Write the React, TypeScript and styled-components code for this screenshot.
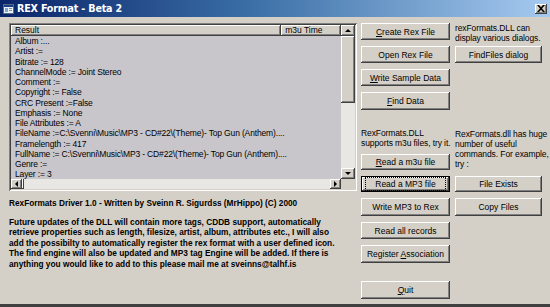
import React from "react";
import styled, { createGlobalStyle, css } from "styled-components";

const GlobalStyle = createGlobalStyle`
  html, body {
    margin: 0;
    padding: 0;
    background: #d4d0c8;
  }
  body {
    width: 550px;
    height: 307px;
    overflow: hidden;
    font-family: "Liberation Sans", Arial, sans-serif;
  }
`;

const raised = css`
  background: #d4d0c8;
  box-shadow: inset -1px -1px #404040, inset 1px 1px #ffffff,
    inset -2px -2px #808080, inset 2px 2px #d4d0c8;
`;

const rows = [
  "Album :...",
  "Artist :=",
  "Bitrate := 128",
  "ChannelMode := Joint Stereo",
  "Comment :=",
  "Copyright := False",
  "CRC Present :=False",
  "Emphasis := None",
  "File Attributes := A",
  "FileName :=C:\\Svenni\\Music\\MP3 - CD#22\\(Theme)- Top Gun (Anthem)....",
  "Framelength := 417",
  "FullName := C:\\Svenni\\Music\\MP3 - CD#22\\(Theme)- Top Gun (Anthem)....",
  "Genre :=",
  "Layer := 3",
];

type ButtonProps = {
  col: string;
  row: string;
  isDefault?: boolean;
  children: React.ReactNode;
};

const Button = ({ col, row, isDefault, children }: ButtonProps) => (
  <ButtonFace $col={col} $row={row} $default={isDefault}>
    {isDefault ? <Focus>{children}</Focus> : <span>{children}</span>}
  </ButtonFace>
);

const App = () => {
  return (
    <>
      <GlobalStyle />
      <Window>
        <TitleBar>
          <AppIcon width="11" height="10" viewBox="0 0 11 10">
            <rect x="0.5" y="0.5" width="10" height="9" fill="#e8f0f8" stroke="#5a6a80" />
            <rect x="1" y="1" width="9" height="2" fill="#1c3c8c" />
            <rect x="2" y="4" width="3" height="4" fill="#7fa8d0" />
            <rect x="6" y="4" width="3" height="1" fill="#8a8a8a" />
            <rect x="6" y="6" width="3" height="1" fill="#8a8a8a" />
          </AppIcon>
          <Title>REX Format - Beta 2</Title>
          <CloseButton>
            <svg width="8" height="7" viewBox="0 0 8 7">
              <path d="M0 0h2l2 2.2L6 0h2L5 3.5 8 7H6L4 4.8 2 7H0l3-3.5z" fill="#000" />
            </svg>
          </CloseButton>
        </TitleBar>
        <Body>
          <LeftColumn>
            <ListFrame>
              <ListArea>
                <Header>
                  <HeaderCell $width={271}>Result</HeaderCell>
                  <HeaderCell $width={60}>m3u Time</HeaderCell>
                </Header>
                <Rows>
                  {rows.map((r) => (
                    <Row key={r}>{r}</Row>
                  ))}
                </Rows>
              </ListArea>
              <VScroll>
                <ArrowButton>
                  <Arrow $dir="up" />
                </ArrowButton>
                <Thumb />
                <Track />
                <ArrowButton>
                  <Arrow $dir="down" />
                </ArrowButton>
              </VScroll>
              <HScroll>
                <ArrowButton>
                  <Arrow $dir="left" />
                </ArrowButton>
                <HThumb />
                <Track />
                <ArrowButton>
                  <Arrow $dir="right" />
                </ArrowButton>
              </HScroll>
              <Corner />
            </ListFrame>
            <Credit>RexFormats Driver 1.0 - Written by Sveinn R. Sigurdss (MrHippo) (C) 2000</Credit>
            <Notes>
              Future updates of the DLL will contain more tags, CDDB support, automatically
              <br />
              retrieve properties such as length, filesize, artist, album, attributes etc., I will also
              <br />
              add the possibilty to automatically register the rex format with a user defined icon.
              <br />
              The find engine will also be updated and MP3 tag Engine will be added. If there is
              <br />
              anything you would like to add to this please mail me at sveinns@talhf.is
            </Notes>
          </LeftColumn>
          <Controls>
            <Button col="1" row="1">
              <u>C</u>reate Rex File
            </Button>
            <Label $col="2" $row="1">
              rexFormats.DLL can
              <br />
              display various dialogs.
            </Label>
            <Button col="1" row="2">Open Rex File</Button>
            <Button col="2" row="2">FindFiles dialog</Button>
            <Button col="1" row="3">
              <u>W</u>rite Sample Data
            </Button>
            <Button col="1" row="4">
              <u>F</u>ind Data
            </Button>
            <Label $col="1" $row="5" $align="end">
              RexFormats.DLL
              <br />
              supports m3u files, try it.
            </Label>
            <Label $col="2" $row="5 / span 2" $pad={13}>
              RexFormats.dll has huge
              <br />
              number of useful
              <br />
              commands. For example,
              <br />
              try :
            </Label>
            <Button col="1" row="6">
              <u>R</u>ead a m3u file
            </Button>
            <Button col="1" row="7" isDefault>
              Read a MP3 file
            </Button>
            <Button col="2" row="7">File Exists</Button>
            <Button col="1" row="8">Write MP3 to Rex</Button>
            <Button col="2" row="8">Copy Files</Button>
            <Button col="1" row="9">Read all records</Button>
            <Button col="1" row="10">
              Register <u>A</u>ssociation
            </Button>
            <Button col="1" row="12">
              <u>Q</u>uit
            </Button>
          </Controls>
        </Body>
      </Window>
    </>
  );
};

const Window = styled.div`
  width: 550px;
  height: 307px;
  box-sizing: border-box;
  display: flex;
  flex-direction: column;
  background: #d4d0c8;
  border-bottom: 3px solid #404040;
`;

const TitleBar = styled.div`
  height: 17px;
  display: flex;
  align-items: center;
  padding: 0 3px 0 3px;
  background: linear-gradient(to right, #0a246a 0%, #3a6ea5 45%, #a6caf0 100%);
`;

const AppIcon = styled.svg`
  flex: none;
  margin-right: 3px;
`;

const Title = styled.div`
  flex: 1;
  color: #ffffff;
  font-weight: bold;
  font-size: 9.6px;
  font-family: "DejaVu Sans", Tahoma, sans-serif;
  letter-spacing: -0.2px;
`;

const CloseButton = styled.div`
  ${raised};
  width: 12px;
  height: 10px;
  display: flex;
  align-items: center;
  justify-content: center;
`;

const Body = styled.div`
  flex: 1;
  display: flex;
  padding: 6px 0 0 9px;
  gap: 4px;
`;

const LeftColumn = styled.div`
  width: 348px;
  display: flex;
  flex-direction: column;
`;

const ListFrame = styled.div`
  height: 168px;
  box-sizing: border-box;
  padding: 2px;
  display: grid;
  grid-template-columns: 1fr 14px;
  grid-template-rows: 1fr 10px;
  background: #d4d0c8;
  box-shadow: inset 1px 1px #808080, inset -1px -1px #ffffff,
    inset 2px 2px #404040, inset -2px -2px #d4d0c8;
`;

const ListArea = styled.div`
  background: #c8c6cb;
  overflow: hidden;
  display: flex;
  flex-direction: column;
`;

const Header = styled.div`
  display: flex;
  height: 11px;
  flex: none;
`;

const HeaderCell = styled.div<{ $width: number }>`
  ${raised};
  width: ${(p) => p.$width}px;
  box-sizing: border-box;
  padding: 0 0 0 4px;
  font-size: 8.5px;
  line-height: 11px;
  color: #000;
  white-space: nowrap;
  overflow: hidden;
`;

const Rows = styled.div`
  padding: 0 0 0 4px;
  overflow: hidden;
  flex: 1;
`;

const Row = styled.div`
  font-size: 8.5px;
  line-height: 10.25px;
  height: 10.25px;
  color: #000;
  white-space: nowrap;
  letter-spacing: -0.15px;
`;

const VScroll = styled.div`
  display: flex;
  flex-direction: column;
  background: #e9e7e3;
`;

const HScroll = styled.div`
  display: flex;
  background: #e9e7e3;
`;

const ArrowButton = styled.div`
  ${raised};
  flex: none;
  width: 14px;
  height: 11px;
  display: flex;
  align-items: center;
  justify-content: center;
  ${HScroll} & {
    width: 11px;
    height: 10px;
  }
`;

const Arrow = styled.div<{ $dir: "up" | "down" | "left" | "right" }>`
  width: 0;
  height: 0;
  border: 3px solid transparent;
  ${(p) =>
    p.$dir === "up"
      ? "border-bottom-color:#000;border-top-width:0;"
      : p.$dir === "down"
      ? "border-top-color:#000;border-bottom-width:0;"
      : p.$dir === "left"
      ? "border-right-color:#000;border-left-width:0;"
      : "border-left-color:#000;border-right-width:0;"}
`;

const Thumb = styled.div`
  ${raised};
  height: 67px;
  flex: none;
`;

const HThumb = styled.div`
  ${raised};
  width: 2px;
  flex: none;
`;

const Track = styled.div`
  flex: 1;
`;

const Corner = styled.div`
  background: #d4d0c8;
`;

const Credit = styled.div`
  margin-top: 8px;
  font-size: 8.25px;
  font-weight: bold;
  line-height: 10px;
  color: #000;
  white-space: nowrap;
`;

const Notes = styled.div`
  margin-top: 8px;
  font-size: 8.3px;
  font-weight: bold;
  line-height: 10.4px;
  color: #000;
  white-space: nowrap;
`;

const Controls = styled.div`
  display: grid;
  grid-template-columns: 89px 87px;
  grid-template-rows: 17px 17px 17px 18px 32px 16px 16px 18px 17px 18px 6px 18px;
  column-gap: 5px;
  row-gap: 6px;
  align-content: start;
`;

const ButtonFace = styled.div<{ $col: string; $row: string; $default?: boolean }>`
  ${raised};
  grid-column: ${(p) => p.$col};
  grid-row: ${(p) => p.$row};
  display: flex;
  align-items: center;
  justify-content: center;
  font-size: 8.5px;
  color: #000;
  white-space: nowrap;
  ${(p) =>
    p.$default &&
    css`
      box-shadow: inset 0 0 0 1px #000, inset -2px -2px #404040,
        inset 2px 2px #ffffff, inset -3px -3px #808080;
    `}
`;

const Focus = styled.span`
  outline: 1px dotted #000;
  outline-offset: 1px;
  padding: 0 8px;
`;

const Label = styled.div<{ $col: string; $row: string; $align?: string; $pad?: number }>`
  grid-column: ${(p) => p.$col};
  grid-row: ${(p) => p.$row};
  align-self: ${(p) => p.$align ?? "start"};
  padding-top: ${(p) => p.$pad ?? 0}px;
  font-size: 8.5px;
  line-height: 10px;
  color: #000;
  white-space: nowrap;
  letter-spacing: -0.1px;
`;

export default App;
